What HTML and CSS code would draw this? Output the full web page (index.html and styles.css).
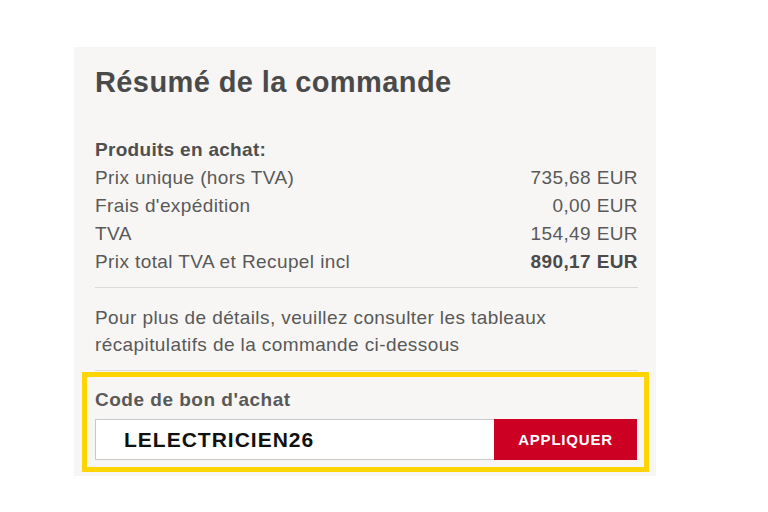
FILE: index.html
```html
<!DOCTYPE html>
<html lang="fr">
<head>
<meta charset="utf-8">
<title>Résumé de la commande</title>
<link rel="stylesheet" href="styles.css">
</head>
<body>
<div class="panel">
  <h1 class="title">Résumé de la commande</h1>
  <div class="summary">
    <div class="row head"><span>Produits en achat:</span></div>
    <div class="row"><span>Prix unique (hors TVA)</span><span>735,68 EUR</span></div>
    <div class="row"><span>Frais d'expédition</span><span>0,00 EUR</span></div>
    <div class="row"><span>TVA</span><span>154,49 EUR</span></div>
    <div class="row"><span>Prix total TVA et Recupel incl</span><span class="strong">890,17 EUR</span></div>
  </div>
  <p class="note">Pour plus de détails, veuillez consulter les tableaux récapitulatifs de la commande ci-dessous</p>
  <div class="voucher">
    <div class="voucher-label">Code de bon d'achat</div>
    <div class="voucher-form">
      <div class="voucher-input">LELECTRICIEN26</div>
      <div class="voucher-btn">APPLIQUER</div>
    </div>
  </div>
</div>
</body>
</html>
```
FILE: styles.css
```css
html, body {
  margin: 0;
  padding: 0;
  background: #ffffff;
}
body {
  font-family: "Liberation Sans", Arial, sans-serif;
  color: #595959;
  width: 768px;
  height: 512px;
  overflow: hidden;
}
.panel {
  margin: 47px 0 0 74px;
  width: 582px;
  box-sizing: border-box;
  padding: 19px 18px 4px 21px;
  background: #f7f6f4;
}
.title {
  margin: 0;
  font-size: 29px;
  font-weight: 700;
  letter-spacing: 0.4px;
  color: #4a4a4a;
  line-height: 32px;
}
.summary {
  margin-top: 38px;
  padding-bottom: 11px;
  border-bottom: 1px solid #dcdad6;
}
.row {
  display: flex;
  justify-content: space-between;
  font-size: 19px;
  letter-spacing: 0.4px;
  line-height: 28px;
}
.row.head {
  font-weight: 700;
  color: #4f4f4f;
  letter-spacing: 0.3px;
}
.strong {
  font-weight: 700;
  color: #4a4a4a;
}
.note {
  margin: 0;
  padding: 16px 0 12px;
  font-size: 19px;
  letter-spacing: 0.4px;
  line-height: 27px;
  border-bottom: 1px solid #dcdad6;
}
.voucher {
  margin: 1px -11px 0 -13px;
  border: 5px solid #ffd400;
  padding: 10px 7px 7px 8px;
}
.voucher-label {
  font-size: 19px;
  font-weight: 700;
  letter-spacing: 0.5px;
  line-height: 26px;
  color: #595959;
}
.voucher-form {
  margin-top: 6px;
  display: flex;
  height: 41px;
  box-sizing: border-box;
  border: 1px solid #c9c9c9;
  background: #ffffff;
}
.voucher-input {
  flex: 1;
  padding-left: 28px;
  font-size: 21px;
  font-weight: 700;
  letter-spacing: 1px;
  line-height: 39px;
  color: #111111;
}
.voucher-btn {
  width: 143px;
  background: #cc0022;
  color: #ffffff;
  font-size: 15px;
  font-weight: 700;
  letter-spacing: 0.8px;
  text-align: center;
  line-height: 41px;
  margin: -1px -1px -1px 0;
}
```
